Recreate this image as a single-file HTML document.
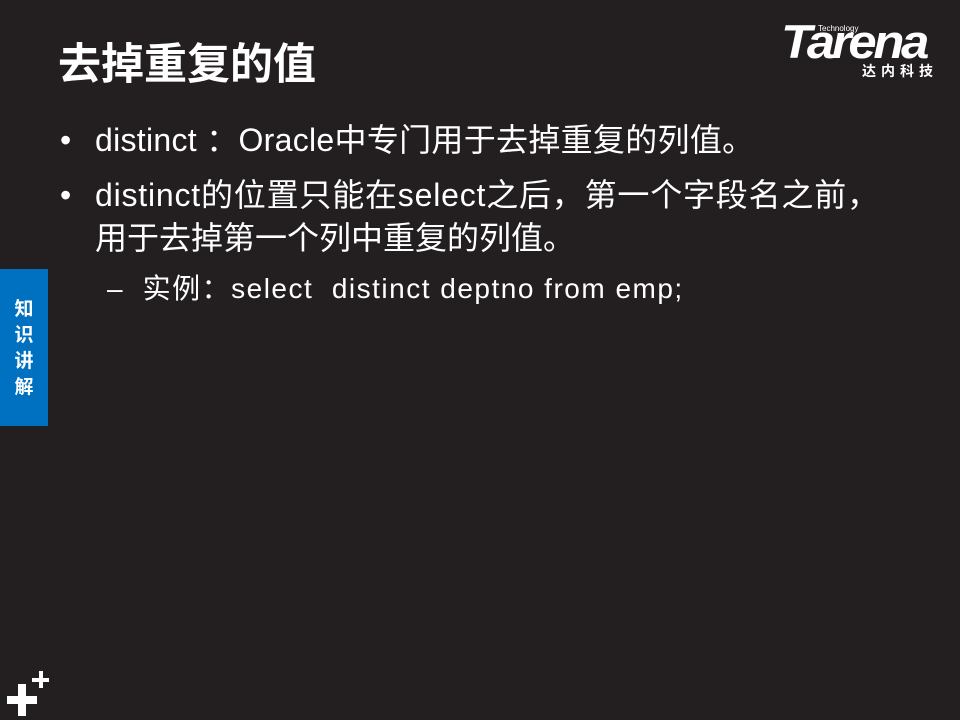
<!DOCTYPE html>
<html><head><meta charset="utf-8"><style>
body{margin:0;width:960px;height:720px;background:#231f20;position:relative;overflow:hidden;font-family:"Liberation Sans","Noto Sans CJK SC",sans-serif;color:#fff}
.a{position:absolute;white-space:nowrap}
.t{left:58px;top:38px;font-size:43px;font-weight:bold;line-height:54px}
.b{font-size:32px;line-height:40px}
.side{position:absolute;left:0;top:269px;width:48px;height:157px;background:#0070c0}
.side div{position:absolute;left:0;width:48px;text-align:center;font-size:19px;font-weight:bold;line-height:22px}
.r{position:absolute;background:#fff}
</style></head><body>
<div class="a t">去掉重复的值</div>
<div class="a" style="left:781px;top:18px;font-size:47px;font-weight:bold;font-style:italic;letter-spacing:-3px;line-height:48px;transform:scaleX(1.08);transform-origin:left">Tarena</div>
<div class="a" style="left:818px;top:24px;font-size:8px;line-height:9px">Technology</div>
<div class="a" style="left:862px;top:62px;font-size:14px;font-weight:bold;letter-spacing:5px;line-height:18px">达内科技</div>
<div class="a b" style="left:60px;top:120px">•</div>
<div class="a b" style="left:95px;top:120px;letter-spacing:0.3px">distinct ：Oracle中专门用于去掉重复的列值。</div>
<div class="a b" style="left:60px;top:175px">•</div>
<div class="a b" style="left:95px;top:175px;letter-spacing:0.8px">distinct的位置只能在select之后，第一个字段名之前，</div>
<div class="a b" style="left:95px;top:218px">用于去掉第一个列中重复的列值。</div>
<div class="a" style="left:107px;top:270px;font-size:28px;line-height:38px;letter-spacing:1.5px">–&nbsp; 实例：select &nbsp;distinct deptno from emp;</div>
<div class="side"><div style="top:30px">知</div><div style="top:56px">识</div><div style="top:82px">讲</div><div style="top:108px">解</div></div>
<div class="r" style="left:7px;top:696px;width:30px;height:8px"></div>
<div class="r" style="left:18px;top:684px;width:8px;height:32px"></div>
<div class="r" style="left:32px;top:678px;width:17px;height:4px"></div>
<div class="r" style="left:39px;top:671px;width:4px;height:17px"></div>
</body></html>
